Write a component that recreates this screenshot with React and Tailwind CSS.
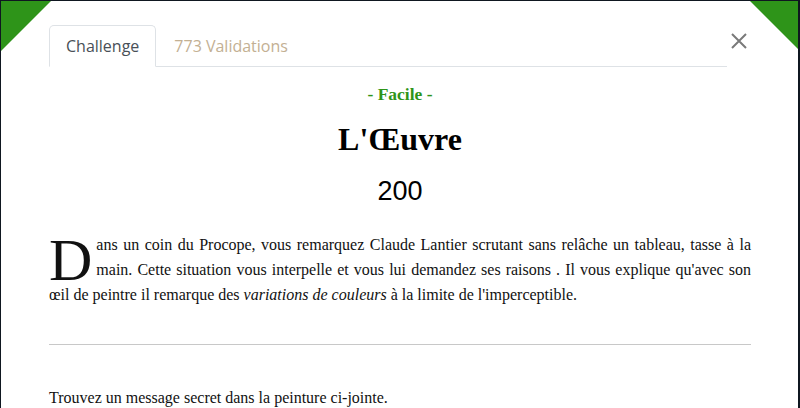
export default function App() {
  return (
    <div className="h-[408px] w-[800px] overflow-hidden bg-[#0f1720] pt-px pl-px pr-[2px]">
      <div className="relative h-full bg-white px-[48px] pr-[47px]">
        {/* corner ribbons */}
        <div className="absolute left-0 top-0 h-[50px] w-[50px] bg-[#2e9419] [clip-path:polygon(0_0,100%_0,0_100%)]" />
        <div className="absolute right-0 top-0 h-[48px] w-[48px] bg-[#2e9419] [clip-path:polygon(0_0,100%_0,100%_100%)]" />

        <div className="flex items-start pt-[24px] font-['Open_Sans',sans-serif] text-[16px]">
          <nav className="flex flex-1 border-b border-[#dee2e6]">
            <button className="-mb-px rounded-t-[5px] border border-b-white border-[#dee2e6] bg-white px-4 py-[9px] leading-[22px] text-[#495057]">
              Challenge
            </button>
            <button className="px-[18px] py-[9px] leading-[22px] text-[#c3b093]">773 Validations</button>
          </nav>
          <button className="mt-[4px] flex h-[24px] w-[24px] items-center justify-center text-[#7a7a7a]">
            <svg width="16" height="16" viewBox="0 0 16 16" fill="none" stroke="currentColor" strokeWidth="2">
              <path d="M1 1L15 15M15 1L1 15" />
            </svg>
          </button>
        </div>

        <div className="font-['Liberation_Serif',serif] text-black">
          <div className="mt-[15px] text-center text-[17.5px] font-bold leading-[24px] text-[#2e9419]">- Facile -</div>
          <h1 className="mt-[13px] text-center text-[32px] font-bold leading-[40px]">L'Œuvre</h1>
          <div className="mt-[16px] text-center font-['Liberation_Sans',sans-serif] text-[27px] leading-[32px]">200</div>

          <p className="mt-[25px] text-justify text-[16px] leading-[25px] text-[#111]">
            <span className="float-left mr-[4px] mt-[7px] text-[60px] leading-[42px]">D</span>
            ans un coin du Procope, vous remarquez Claude Lantier scrutant sans relâche un tableau, tasse à la main. Cette
            situation vous interpelle et vous lui demandez ses raisons . Il vous explique qu'avec son œil de peintre il
            remarque des <em>variations de couleurs</em> à la limite de l'imperceptible.
          </p>

          <hr className="mt-[37px] border-t border-[#c8c8c8]" />

          <p className="mt-[40px] text-[16px] leading-[25px] text-[#111]">Trouvez un message secret dans la peinture ci-jointe.</p>
        </div>
      </div>
    </div>
  )
}
